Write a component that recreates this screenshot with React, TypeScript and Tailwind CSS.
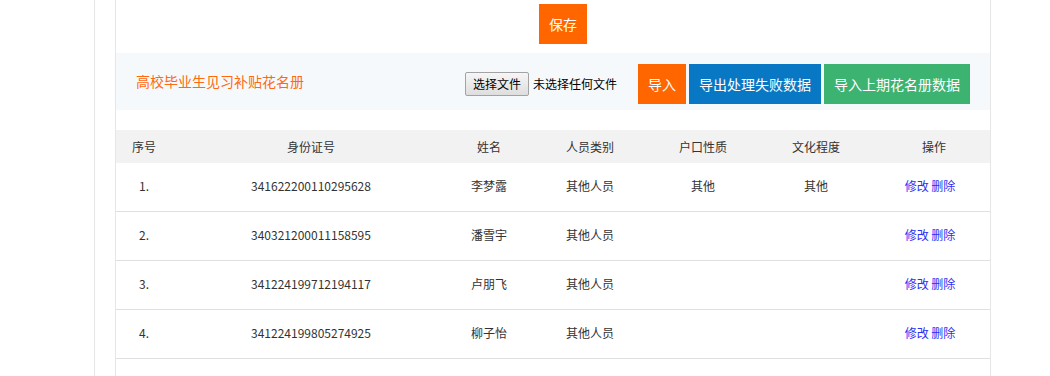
import React from 'react';

const cols = 'grid grid-cols-[56px_278px_78px_124px_102px_124px_112px]';

const rows = [
  { no: '1.', id: '341622200110295628', name: '李梦露', type: '其他人员', hukou: '其他', edu: '其他' },
  { no: '2.', id: '340321200011158595', name: '潘雪宇', type: '其他人员', hukou: '', edu: '' },
  { no: '3.', id: '341224199712194117', name: '卢朋飞', type: '其他人员', hukou: '', edu: '' },
  { no: '4.', id: '341224199805274925', name: '柳子怡', type: '其他人员', hukou: '', edu: '' },
];

const headers = ['序号', '身份证号', '姓名', '人员类别', '户口性质', '文化程度', '操作'];

export default function App() {
  return <div className="flex w-[1050px] h-[376px] overflow-hidden bg-white text-[#333] font-['Noto_Sans_CJK_SC','Noto_Sans',sans-serif]">
      <div className="w-[95px] shrink-0 border-r border-[#e6e6e6]" />
      <div className="w-[21px] shrink-0 border-r border-[#e6e6e6]" />
      <div className="w-[875px] shrink-0 border-r border-[#e6e6e6]">
        <div className="pt-[4px] pl-[423px]">
          <button className="h-[40px] w-[48px] bg-[#ff6600] text-white text-[14px]">保存</button>
        </div>
        <div className="mt-[9px] h-[57px] bg-[#f5f9fc] flex items-center justify-between pl-[20px] pr-[20px]">
          <div className="text-[14px] text-[#ff6a10]">高校毕业生见习补贴花名册</div>
          <div className="flex items-center pt-[5px]">
            <span className="h-[24px] px-[7px] flex items-center text-[12px] text-black border border-[#a3a3a3] rounded-[2px] bg-gradient-to-b from-[#f6f6f6] to-[#dedede]">选择文件</span>
            <span className="ml-[4px] text-[12px] text-black">未选择任何文件</span>
            <button className="ml-[21px] h-[40px] px-[10px] bg-[#ff6600] text-white text-[14px]">导入</button>
            <button className="ml-[3px] h-[40px] px-[10px] bg-[#0878c4] text-white text-[14px]">导出处理失败数据</button>
            <button className="ml-[3px] h-[40px] px-[10px] bg-[#3cb371] text-white text-[14px]">导入上期花名册数据</button>
          </div>
        </div>
        <div className="mt-[20px] text-[12px]">
          <div className={`${cols} h-[33px] bg-[#f2f2f2] items-center text-center`}>
            {headers.map(h => <div key={h}>{h}</div>)}
          </div>
          {rows.map(r => <div key={r.no} className={`${cols} h-[49px] pb-[3px] border-b border-[#e0e0e0] items-center text-center`}>
              <div>{r.no}</div>
              <div>{r.id}</div>
              <div>{r.name}</div>
              <div>{r.type}</div>
              <div>{r.hukou}</div>
              <div>{r.edu}</div>
              <div className="pr-[8px] text-[#2e2ef5]">
                <a className="cursor-pointer">修改</a> <a className="cursor-pointer">删除</a>
              </div>
            </div>)}
        </div>
      </div>
    </div>;
}
